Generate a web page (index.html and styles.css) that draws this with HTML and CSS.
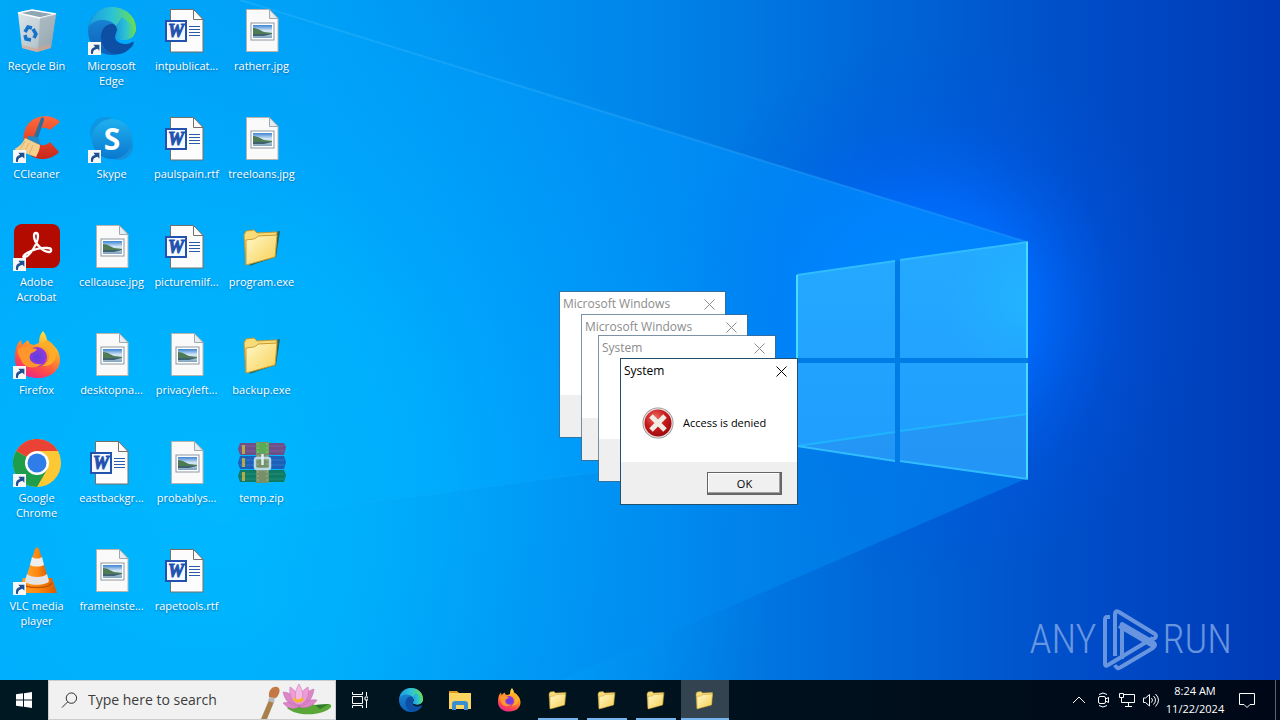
FILE: index.html
```html
<!DOCTYPE html>
<html lang="en">
<head>
<meta charset="utf-8">
<title>Desktop</title>
<link rel="stylesheet" href="styles.css">
</head>
<body>
<svg class="defs" aria-hidden="true">
  <defs>
    <linearGradient id="binG" x1="0" y1="0" x2="1" y2="1"><stop offset="0" stop-color="#dfe7eb"/><stop offset=".6" stop-color="#bccad1"/><stop offset="1" stop-color="#9aa7ae"/></linearGradient>
    <linearGradient id="edgeA" x1="0" y1="0" x2="1" y2="0"><stop offset="0" stop-color="#1b9de0"/><stop offset=".5" stop-color="#2cc3d5"/><stop offset="1" stop-color="#6be04c"/></linearGradient>
    <linearGradient id="edgeB" x1="0" y1="0" x2="0" y2="1"><stop offset="0" stop-color="#1b8fdc"/><stop offset="1" stop-color="#0d5fb8"/></linearGradient>
    <linearGradient id="skyG" x1="0" y1="0" x2="0" y2="1"><stop offset="0" stop-color="#1fb0ee"/><stop offset="1" stop-color="#0a78d0"/></linearGradient>
    <linearGradient id="ccG" x1="0" y1="0" x2="0" y2="1"><stop offset="0" stop-color="#ff6a3c"/><stop offset="1" stop-color="#c8261a"/></linearGradient>
    <linearGradient id="foxG" x1=".8" y1="0" x2=".3" y2="1"><stop offset="0" stop-color="#fff34a"/><stop offset=".4" stop-color="#ff9a26"/><stop offset=".75" stop-color="#ff4a4a"/><stop offset="1" stop-color="#e8258c"/></linearGradient>
    <radialGradient id="foxP"><stop offset="0" stop-color="#5b3fe0"/><stop offset="1" stop-color="#9a38d8"/></radialGradient>
    <linearGradient id="folG" x1="0" y1="0" x2="1" y2="1"><stop offset="0" stop-color="#fff8c8"/><stop offset="1" stop-color="#f8cf52"/></linearGradient>
    <linearGradient id="picG" x1="0" y1="0" x2="0" y2="1"><stop offset="0" stop-color="#3d83d2"/><stop offset=".45" stop-color="#d7eaf7"/><stop offset="1" stop-color="#7fa2bd"/></linearGradient>
    <linearGradient id="coneG" x1="0" y1="0" x2="1" y2="0"><stop offset="0" stop-color="#ffa22a"/><stop offset=".5" stop-color="#ff8a10"/><stop offset="1" stop-color="#d85a00"/></linearGradient>
    <radialGradient id="errG" cx=".4" cy=".3" r=".8"><stop offset="0" stop-color="#ec6a60"/><stop offset=".5" stop-color="#c8181c"/><stop offset="1" stop-color="#8e0808"/></radialGradient>

    <symbol id="shortcut" viewBox="0 0 12 12"><path d="M0 0h12v12H0z" fill="#f7f7f7"/><path d="M3 11c-1-4 1-6 3.500-6.500L5 2.500h5.500v5.500L8.800 6.300C6 7 4.500 8 4.500 11z" fill="#1f4f92"/></symbol>

    <symbol id="bin" viewBox="0 0 48 48">
      <path d="m5 6 14-3 24 4-5 34-14 4-15-4z" fill="url(#binG)"/>
      <path d="m5 6 14-3 24 4-16 4z" fill="#8fa6b2" stroke="#fff" stroke-width="1.300"/>
      <path d="M27 11 43 7l-5 34-13 4z" fill="#8d9ca6" opacity=".5"/>
      <path d="m9 38 13 3 16-4-1 4-13 4-15-4z" fill="#d8a48c" opacity=".6"/>
      <g fill="none" stroke="#1673cc" stroke-width="3.500"><path d="m12 25 3-5 4 1"/><path d="m20 22 3 5-2 4"/><path d="m18 33-5-1-1-4"/></g>
    </symbol>

    <symbol id="edge" viewBox="0 0 48 48">
      <circle cx="24" cy="24" r="24" fill="url(#edgeB)"/>
      <path d="M1 19C4 7 13 0 24 0c14 0 24 10 24 21 0 7-5 12-12 12-5 0-9-2-8-4 2-3 3-6 0-10C23 12 9 10 1 19z" fill="url(#edgeA)"/>
      <path d="M13 30c0-8 5-13 11-13 3 0 5 3 5 7 0 3-4 6 0 10 4 4 11 4 15 1 2-1 2 1 1 3-5 7-12 10-18 9-8-1-14-8-14-17z" fill="#0c4fa4"/>
      <path d="M28 33c4 5 12 5 16 2 3-2 4-1 2 2l3 3V24c-3 6-7 9-13 9-5 0-8-2-8-4 1-2 3-5 2-8-1 3-4 8-2 12z" fill="#00a9fb" class="edge-gap"/>
      <path d="M48 21c0 8-5 12-12 12-5 0-9-2-8-4 2-3 3-6 0-10l6-9z" fill="url(#edgeA)"/>
    </symbol>

    <symbol id="ccleaner" viewBox="0 0 48 48">
      <path d="M47 7C40 0 26-1 17 7S9 32 16 39s22 7 30-2L37 27c-4 4-9 4-12 1s-4-8-1-12 9-4 13-1z" fill="url(#ccG)"/>
      <path d="M28 3c2-1 4 0 3 2l-7 21-4-2z" fill="#2c6f9f"/>
      <path d="m15 21 10 1 3 8-14-4z" fill="#2787c4"/>
      <path d="M12 23 27 30c0 4-2 8-4 12L1 34c5-2 9-6 11-11z" fill="#f4cf8d"/>
      <path d="m12 26-5 9m9-7-5 10m9-8-4 10" stroke="#dcb374" fill="none"/>
    </symbol>

    <symbol id="skype" viewBox="0 0 48 48">
      <circle cx="17" cy="17" r="15" fill="#0f96e2"/><circle cx="31" cy="31" r="14" fill="#1690dc"/>
      <circle cx="24" cy="24" r="20" fill="url(#skyG)"/>
      <text x="24" y="35" text-anchor="middle" class="skype-letter">S</text>
    </symbol>

    <symbol id="acrobat" viewBox="0 0 48 48">
      <rect x="1" y="1" width="46" height="44" rx="8" fill="#b30b00"/>
      <path d="M12 34c5-1 13-14 13-21 0-4-4-4-4 0 0 7 9 16 15 16 3 0 3-4-1-4-7-1-16 2-21 5-5 3-4 5-2 4z" fill="none" stroke="#fff" stroke-width="2.300"/>
    </symbol>

    <symbol id="firefox" viewBox="0 0 48 48">
      <path d="M30 0c3 4 4 7 4 10 8 4 13 10 13 19 0 10-9 18-22 18C10 47 1 38 2 26c0-8 2-14 6-17l1 5 6-5 2 4 4 1 5-2c0-5 1-9 4-12z" fill="url(#foxG)"/>
      <circle cx="24" cy="26" r="10" fill="url(#foxP)"/>
      <path d="M5 18c5-3 9-4 13-1l6 1c-2 4-6 3-7 6-2 6 4 10 12 9-8 6-18 4-21-4-2-5-4-7-3-11z" fill="#ff962b"/>
      <path d="M26 15c5-1 9 2 10 7 1 6-2 11-7 13 10 1 15-6 14-14-1-7-5-10-9-12-3 2-5 3-8 6z" fill="#ffad28"/>
    </symbol>

    <symbol id="chrome" viewBox="0 0 48 48">
      <circle cx="24" cy="24" r="24" fill="#fcc934"/>
      <path d="M24 24 3.200 12A24 24 0 0 1 44.800 12z" fill="#ea4335"/>
      <path d="M3.200 12A24 24 0 0 0 24 48l10.400-18L24 24z" fill="#1e9e4a"/>
      <path d="M24 12h21l2 6H30z" fill="#fcc934"/><path d="M24 12h20.800L40 6 20 5z" fill="#ea4335"/>
      <circle cx="24" cy="24" r="12" fill="#fff"/><circle cx="24" cy="24" r="9.500" fill="#2f7de9"/>
    </symbol>

    <symbol id="vlc" viewBox="0 0 48 48">
      <path d="m10 31-5 15h39l-5-15z" fill="url(#coneG)"/>
      <path d="M22 2c1-2 3-2 4 0l10 32c-2 6-22 6-24 0z" fill="url(#coneG)"/>
      <path d="m19 10-2 8c4 2 10 2 14 0l-2-8c-3 2-7 2-10 0z" fill="#f0eeec"/>
      <path d="m14 27-2 7c2 5 22 5 24 0l-2-7c-4 4-16 4-20 0z" fill="#e6e4e2"/>
      <path d="M9 36c4 6 26 6 30 0" fill="none" stroke="#c85400" stroke-width="1.500"/>
    </symbol>

    <symbol id="word" viewBox="0 0 48 48">
      <path d="M7.500 2.500h23l9.500 10v32.500H7.500z" fill="#fcfcfc" stroke="#74706c"/>
      <path d="M30.500 2.500v10H40z" fill="#fff" stroke="#74706c"/>
      <path d="M26 19.500h11m-11 3h11m-11 3h11m-11 3h11" stroke="#2a5caa"/>
      <rect x="3" y="14" width="20" height="20" fill="#f4f8ff" stroke="#2352ae" stroke-width="2"/>
      <text x="13" y="30" text-anchor="middle" class="word-letter">W</text>
    </symbol>

    <symbol id="image" viewBox="0 0 48 48">
      <path d="M8.500 2.500h23l8.500 9v33H8.500z" fill="#fafafa" stroke="#b9b3ad"/>
      <path d="M31.500 2.500v9H40z" fill="#e4edf2" stroke="#9fa9ae"/>
      <rect x="13" y="16" width="23" height="17" fill="#fff" stroke="#8d97a1"/>
      <path d="M15 18h19v13H15z" fill="url(#picG)"/>
      <path d="M15 21c5 0 8 3 11 4l8 1v1H15z" fill="#4f7a56"/><path d="M15 27h19l-8 2H15z" fill="#3f6070"/>
    </symbol>

    <symbol id="folder" viewBox="0 0 48 48">
      <path d="m11 43 27-9 4-26-4 1z" fill="#274a2e" opacity=".75"/>
      <path d="m6 12 2-4 8-1 3 3 20-1-2 24-29 8z" fill="#f8dc78" stroke="#c39a30"/>
      <path d="M8 17c5-1 9 0 12-4l19-1c-1 9-1 14-2 22L8 42z" fill="url(#folG)" stroke="#c79a2c"/>
    </symbol>

    <symbol id="zip" viewBox="0 0 48 48">
      <path d="M2 4h44l2 4-2 8H2L0 10z" fill="#6e4f88"/><path d="M2 7h44M2 12h44" stroke="#80619a"/>
      <path d="M2 17h44l2 6-2 7H2l-2-6z" fill="#1c60b8"/><path d="M2 21h44M2 26h44" stroke="#2f76cc"/>
      <path d="M2 31h44l2 5-2 7H2l-2-6z" fill="#117a64"/><path d="M2 35h44M2 40h44" stroke="#1d9274"/>
      <path d="M4 6h3v9H4zm0 13h3v9H4zm0 14h3v9H4z" fill="#b7a84e"/>
      <path d="M18 3h13v41H18z" fill="#76906a"/><path d="M18 4h13v10H18z" fill="#5bab58"/><path d="M20 4v40m9-40v40" stroke="#9db783" stroke-dasharray="2 2"/>
      <rect x="17" y="19" width="15" height="11" rx="2" fill="none" stroke="#b9d7e6" stroke-width="2.500"/><path d="M24.500 15v11" stroke="#e1eef4" stroke-width="2.500"/>
    </symbol>

    <symbol id="close" viewBox="0 0 11 11"><path d="m.5.5 10 10m0-10-10 10" fill="none" stroke="currentColor"/></symbol>
  </defs>
</svg>

<div class="screen">
  <svg class="wallpaper" viewBox="0 0 1280 720" preserveAspectRatio="none" aria-hidden="true">
    <defs>
      <linearGradient id="base" x1="0" x2="1" y1="0" y2="0"><stop offset="0" stop-color="#00a8f8"/><stop offset=".25" stop-color="#009ff6"/><stop offset=".5" stop-color="#0086ea"/><stop offset=".7" stop-color="#0064d6"/><stop offset=".85" stop-color="#004cc8"/><stop offset="1" stop-color="#003ab6"/></linearGradient>
      <radialGradient id="leftGlow" gradientUnits="userSpaceOnUse" cx="220" cy="500" r="560"><stop offset="0" stop-color="#00b8ff"/><stop offset=".4" stop-color="#00b4ff" stop-opacity=".8"/><stop offset="1" stop-color="#00a4ff" stop-opacity="0"/></radialGradient>
      <radialGradient id="winGlow" gradientUnits="userSpaceOnUse" cx="930" cy="310" r="270"><stop offset="0" stop-color="#0084ff"/><stop offset=".4" stop-color="#006cff" stop-opacity=".8"/><stop offset=".7" stop-color="#0058ec" stop-opacity=".25"/><stop offset="1" stop-color="#0050e0" stop-opacity="0"/></radialGradient>
      <linearGradient id="beam" gradientUnits="userSpaceOnUse" x1="240" x2="1027" y1="0" y2="0"><stop offset="0" stop-color="#00acff" stop-opacity="0"/><stop offset=".5" stop-color="#0098ff" stop-opacity=".5"/><stop offset="1" stop-color="#0088ff" stop-opacity=".8"/></linearGradient>
      <linearGradient id="ray" gradientUnits="userSpaceOnUse" x1="240" x2="1027" y1="0" y2="0"><stop offset="0" stop-color="#50c4ff" stop-opacity=".25"/><stop offset="1" stop-color="#30a4ff" stop-opacity=".35"/></linearGradient>
      <linearGradient id="low" gradientUnits="userSpaceOnUse" x1="250" x2="1000" y1="0" y2="0"><stop offset="0" stop-color="#0098e8" stop-opacity="0"/><stop offset=".6" stop-color="#0078da" stop-opacity=".3"/><stop offset="1" stop-color="#0068d8" stop-opacity=".6"/></linearGradient>
      <linearGradient id="pane" x1="0" x2="0" y1="0" y2="1"><stop offset="0" stop-color="#24aaff"/><stop offset="1" stop-color="#209cff"/></linearGradient>
      <radialGradient id="paneGlow" gradientUnits="userSpaceOnUse" cx="1027" cy="302" r="80"><stop offset="0" stop-color="#20c0ff" stop-opacity=".5"/><stop offset="1" stop-color="#20c0ff" stop-opacity="0"/></radialGradient>
    </defs>
    <path d="M0 0h1280v720H0z" fill="url(#base)"/>
    <path d="M0 0h1280v720H0z" fill="url(#leftGlow)"/>
    <path d="M0 0h1280v720H0z" fill="url(#winGlow)"/>
    <path d="M240 0 1027 242v236L560 680H0V0z" fill="url(#beam)"/>
    <path d="M160 530 797 446l230 32-467 202H0z" fill="url(#low)"/>
    <path d="M240 0 1027 242" stroke="url(#ray)" stroke-width="2"/>
    <path d="M160 530 797 446" stroke="#20b4ff" stroke-opacity=".12" stroke-width="2"/>
    <path d="M797 275 1028 242v237L797 446z" fill="#007ce6"/>
    <path d="M797 275 895 261v97h-98zM900 260l128-18v116H900zM797 363h98v98l-98-15zM900 363h128v116l-128-18z" fill="url(#pane)"/>
    <path d="m900 260 128-18v116H900z" fill="url(#paneGlow)"/>
    <path d="m797 446 98-14v29zM900 431l128-17v65l-128-18z" fill="#2494f4" fill-opacity=".8"/>
    <path d="m797 446 98-14m5-1 128-17" stroke="#20b4ff" stroke-width="2"/>
    <path d="m797 275 98-14m5-1 128-18M797 446l98 15m5 0 128 18" stroke="#30bcff" fill="none" stroke-width="2"/>
    <path d="M797 275v83m0 5v83M1027 242v116m0 5v115" stroke="#44dcff" stroke-width="2"/>
  </svg>

  <main class="workspace">
    <div class="shortcuts">
      <button class="item"><svg class="glyph"><use href="#bin"/></svg><span>Recycle Bin</span></button>
      <button class="item"><svg class="glyph"><use href="#ccleaner"/><use href="#shortcut" y="35" width="13" height="13"/></svg><span>CCleaner</span></button>
      <button class="item"><svg class="glyph"><use href="#acrobat"/><use href="#shortcut" y="35" width="13" height="13"/></svg><span>Adobe Acrobat</span></button>
      <button class="item"><svg class="glyph"><use href="#firefox"/><use href="#shortcut" y="35" width="13" height="13"/></svg><span>Firefox</span></button>
      <button class="item"><svg class="glyph"><use href="#chrome"/><use href="#shortcut" y="35" width="13" height="13"/></svg><span>Google Chrome</span></button>
      <button class="item"><svg class="glyph"><use href="#vlc"/><use href="#shortcut" y="35" width="13" height="13"/></svg><span>VLC media player</span></button>

      <button class="item"><svg class="glyph"><use href="#edge"/><use href="#shortcut" y="35" width="13" height="13"/></svg><span>Microsoft Edge</span></button>
      <button class="item"><svg class="glyph"><use href="#skype"/><use href="#shortcut" y="35" width="13" height="13"/></svg><span>Skype</span></button>
      <button class="item"><svg class="glyph"><use href="#image"/></svg><span>cellcause.jpg</span></button>
      <button class="item"><svg class="glyph"><use href="#image"/></svg><span>desktopna...</span></button>
      <button class="item"><svg class="glyph"><use href="#word"/></svg><span>eastbackgr...</span></button>
      <button class="item"><svg class="glyph"><use href="#image"/></svg><span>frameinste...</span></button>

      <button class="item"><svg class="glyph"><use href="#word"/></svg><span>intpublicat...</span></button>
      <button class="item"><svg class="glyph"><use href="#word"/></svg><span>paulspain.rtf</span></button>
      <button class="item"><svg class="glyph"><use href="#word"/></svg><span>picturemilf...</span></button>
      <button class="item"><svg class="glyph"><use href="#image"/></svg><span>privacyleft...</span></button>
      <button class="item"><svg class="glyph"><use href="#image"/></svg><span>probablys...</span></button>
      <button class="item"><svg class="glyph"><use href="#word"/></svg><span>rapetools.rtf</span></button>

      <button class="item"><svg class="glyph"><use href="#image"/></svg><span>ratherr.jpg</span></button>
      <button class="item"><svg class="glyph"><use href="#image"/></svg><span>treeloans.jpg</span></button>
      <button class="item"><svg class="glyph"><use href="#folder"/></svg><span>program.exe</span></button>
      <button class="item"><svg class="glyph"><use href="#folder"/></svg><span>backup.exe</span></button>
      <button class="item"><svg class="glyph"><use href="#zip"/></svg><span>temp.zip</span></button>
    </div>

    <section class="window w1"><header class="titlebar"><h2>Microsoft Windows</h2><button class="close" aria-label="Close"><svg><use href="#close"/></svg></button></header><div class="body"></div><footer class="foot"></footer></section>
    <section class="window w2"><header class="titlebar"><h2>Microsoft Windows</h2><button class="close" aria-label="Close"><svg><use href="#close"/></svg></button></header><div class="body"></div><footer class="foot"></footer></section>
    <section class="window w3"><header class="titlebar"><h2>System</h2><button class="close" aria-label="Close"><svg><use href="#close"/></svg></button></header><div class="body"></div><footer class="foot"></footer></section>
    <section class="window w4 active" role="dialog" aria-label="System">
      <header class="titlebar"><h2>System</h2><button class="close" aria-label="Close"><svg><use href="#close"/></svg></button></header>
      <div class="body">
        <svg class="error" viewBox="0 0 32 32" aria-hidden="true"><circle cx="16" cy="16" r="15.500" fill="#8f8f8f"/><circle cx="16" cy="16" r="14.700" fill="#e8dcdc"/><circle cx="16" cy="16" r="13.500" fill="url(#errG)"/><path d="m9 9 14 14m0-14L9 23" stroke="#f0ece4" stroke-width="5"/></svg>
        <p>Access is denied</p>
      </div>
      <footer class="foot"><button class="ok">OK</button></footer>
    </section>

    <div class="watermark">
      <span>ANY</span>
      <svg viewBox="0 0 56 64" aria-hidden="true"><g fill="none" stroke="currentColor" stroke-width="4" stroke-linejoin="round"><path d="M8 9H5q-2 0-2 3v44q0 3 3 1l45-27"/><path d="M13 48V6q0-4 4-2l36 22q2 2 0 4l-2 1"/><path d="m17 18 34 20"/><path d="m13 57q2 5 6 2l32-19q4-3 0-6L20 16v35"/></g></svg>
      <span>RUN</span>
    </div>
  </main>

  <nav class="taskbar">
    <button class="task start" aria-label="Start"><svg viewBox="0 0 16 16"><path d="M0 2.300 7 1.300v6.200H0zM8 1.200 16 0v7.500H8zM0 8.500h7v6.200l-7-1zM8 8.500h8V16l-8-1.200z" fill="#fff"/></svg></button>
    <label class="search">
      <svg class="lens" viewBox="0 0 18 18"><circle cx="11" cy="6.500" r="5.500"/><path d="m7 10.500-6 6"/></svg>
      <input type="text" placeholder="Type here to search" aria-label="Search">
      <svg class="art" viewBox="0 0 76 38" aria-hidden="true">
        <path d="M28 27c6-7 18-8 28-3l14-1c5 1 1 6-6 8-12 4-28 3-36-4z" fill="#5aa637"/><path d="m56 24 14-1-9 5z" fill="#2f7c2c"/>
        <g fill="#dc86c8" stroke="#c068b0" stroke-width=".5"><path d="M24 11c8 0 12 6 16 14-10 0-14-6-16-14zM55 8c-8 2-12 8-15 17 10-1 14-9 15-17zM24 22c6-2 12 0 16 4-7 3-12 1-16-4zM58 19c-7-1-13 1-18 7 8 2 14-1 18-7z"/><path d="M31 6c7 4 9 10 9 19-8-4-10-11-9-19zM49 6c-7 4-10 10-9 19 8-4 11-11 9-19z" fill="#ec9cd6"/><path d="M40 3c5 8 5 14 0 21-5-7-5-13 0-21z" fill="#f4b8e2"/></g>
        <path d="M35 16q4 5 8 0l2 3q-6 5-11 0z" fill="#f6b72c"/>
        <path d="m2 38 8-19 5 2-7 17z" fill="#a8804c"/><path d="m9 20 2-5 5 1-1 6z" fill="#b6b9bb"/><path d="M10 16c-1-6 3-11 8-10 4 1 3 7-1 11z" fill="#c47844"/>
      </svg>
    </label>
    <button class="task" aria-label="Task view"><svg class="view" viewBox="0 0 16 16"><path d="M.5 4.500h10v7H.500zM.5 0v2.500h10V0M.5 16v-2.500h10V16M14.500 0v4m0 4v8M13 5h3v3h-3z"/></svg></button>
    <div class="pinned">
      <button class="task" aria-label="Microsoft Edge"><svg class="app"><use href="#edge"/></svg></button>
      <button class="task" aria-label="File Explorer"><svg class="app" viewBox="0 0 24 24"><path d="M1 3h8l2 2h12v3H1z" fill="#e09a1c"/><path d="M1 5h22v16H1z" fill="#fbd560"/><path d="M4 22v-6q0-3 3-3h10q3 0 3 3v6h-4v-5H8v5z" fill="#3a8fd0"/></svg></button>
      <button class="task" aria-label="Firefox"><svg class="app"><use href="#firefox"/></svg></button>
      <button class="task open" aria-label="Program 1"><svg class="app"><use href="#folder"/></svg></button>
      <button class="task open" aria-label="Program 2"><svg class="app"><use href="#folder"/></svg></button>
      <button class="task open" aria-label="Program 3"><svg class="app"><use href="#folder"/></svg></button>
      <button class="task open current" aria-label="Program 4"><svg class="app"><use href="#folder"/></svg></button>
    </div>
    <div class="tray">
      <button class="tray-item" aria-label="Show hidden icons"><svg viewBox="0 0 16 16"><path d="m2 11 6-6 6 6"/></svg></button>
      <button class="tray-item" aria-label="Meet now"><svg viewBox="0 0 16 16"><rect x="3.500" y="4.500" width="7" height="7" rx="1.500"/><path d="m10.500 7 3-1.500v5l-3-1.500M4 2.500q4-3 8 0m-8 11q4 3 8 0"/></svg></button>
      <button class="tray-item" aria-label="Network"><svg viewBox="0 0 16 16"><path d="M5 2.500h10.500v8H5M9.500 10.500v3.500M6 14.500h7M.5 1.500h4v4h-4zM2.500 5.500v5h3"/></svg></button>
      <button class="tray-item" aria-label="Volume"><svg viewBox="0 0 16 16"><path d="M.5 6v4.500h2l4 3.500V2.500L2.500 6zM8.500 6q2 2 0 4.500M10.500 4q4 4 0 8.500M12.500 2q6 6 0 12.500"/></svg></button>
      <button class="clock"><span>8:24 AM</span><span>11/22/2024</span></button>
      <button class="notes" aria-label="Notifications"><svg viewBox="0 0 16 16"><path d="M.5 1.500h15v11H11l-3 3-3-3H.5z"/></svg></button>
      <button class="peek" aria-label="Show desktop"></button>
    </div>
  </nav>
</div>
</body>
</html>
```
FILE: styles.css
```css
* { box-sizing: border-box; }
body { margin: 0; font-family: "Open Sans", "Noto Sans", sans-serif; font-size: 11px; }
button { margin: 0; padding: 0; border: 0; background: none; font: inherit; color: inherit; }
h2, p { margin: 0; font-weight: 400; }
svg { display: block; }
.defs { position: absolute; width: 0; height: 0; }

.screen { position: relative; display: flex; flex-direction: column; height: 100vh; overflow: hidden; }
.wallpaper { position: absolute; inset: 0; width: 100%; height: 100%; }
.workspace { position: relative; flex: 1; min-height: 0; }

.shortcuts { display: grid; grid-auto-flow: column; grid-template-rows: repeat(6, 108px); grid-auto-columns: 75px; justify-content: start; }
.item { display: flex; flex-direction: column; align-items: center; gap: 3px; padding: 7px 2px 0 0; color: #fff; line-height: 15px; text-align: center; text-shadow: 0 1px 2px rgba(0, 40, 90, 0.5); }
.glyph { width: 48px; height: 48px; }
.skype-letter { font: 700 30px "Open Sans", sans-serif; fill: #fff; text-shadow: none; }
.word-letter { font: italic 700 18px "Liberation Serif", serif; fill: #2352ae; stroke: #2352ae; text-shadow: none; }
.pinned .app { --gap: #00141f; }
.edge-gap { fill: var(--gap, #00a9fb); }

.window { position: absolute; display: flex; flex-direction: column; width: 178px; height: 147px; border: 1px solid rgba(70, 100, 130, 0.7); background: #fff; background-clip: padding-box; color: #8c8c8c; }
.w1 { left: 559px; top: 291px; width: 167px; }
.w2 { left: 581px; top: 314px; width: 167px; }
.w3 { left: 598px; top: 335px; }
.w4 { left: 620px; top: 358px; }
.active { border-color: #23506f; color: #000; }
.titlebar { display: flex; justify-content: space-between; align-items: center; height: 24px; padding: 0 10px 0 3px; }
.titlebar h2 { font-size: 12px; line-height: 16px; }
.close svg { width: 11px; height: 11px; }
.body { display: flex; flex: 1; align-items: center; gap: 9px; padding: 0 21px; }
.error { width: 32px; height: 32px; }
.foot { display: flex; justify-content: flex-end; align-items: center; height: 42px; padding-right: 15px; background: #efefef; }
.ok { width: 75px; height: 23px; border: 1px solid #646464; background: #f0f0f0; box-shadow: inset -1px -1px #696969, inset -2px -2px #a0a0a0, inset 1px 1px #fff; }

.watermark { position: absolute; right: 48px; bottom: 8px; display: flex; align-items: center; gap: 5px; color: #7ba3e4; font: 300 40px/64px "Roboto Condensed", "Liberation Sans Narrow", "Open Sans Condensed", sans-serif; opacity: 0.85; }
.watermark svg { width: 56px; height: 64px; }

.taskbar { position: relative; display: flex; height: 40px; background: linear-gradient(90deg, #001822, #00131e 50%, #000817); color: #fff; }
.task { display: flex; align-items: center; justify-content: center; width: 48px; height: 40px; }
.start svg { width: 16px; height: 16px; }
.search { display: flex; align-items: center; width: 288px; padding-left: 12px; border: 1px solid #c9cdd0; background: #f1f1f1; }
.lens { width: 17px; height: 17px; fill: none; stroke: #222; }
.search input { flex: 1; min-width: 0; margin-left: 10px; padding: 0; border: 0; outline: 0; background: none; font: 14px/20px "Open Sans", sans-serif; color: #333; }
.search input::placeholder { color: #3c3c3c; opacity: 1; }
.art { width: 76px; height: 38px; }
.view { width: 16px; height: 16px; fill: none; stroke: #fff; }
.pinned { display: flex; gap: 1px; margin-left: 3px; }
.app { width: 24px; height: 24px; }
.open { background: linear-gradient(#76b4ee, #76b4ee) bottom / 40px 2px no-repeat; }
.current { background: linear-gradient(#76b4ee, #76b4ee) bottom / 48px 2px no-repeat #334450; }
.tray { display: flex; margin-left: auto; }
.tray-item { display: flex; align-items: center; justify-content: center; width: 24px; }
.tray svg { width: 16px; height: 16px; fill: none; stroke: #fff; }
.clock { display: flex; flex-direction: column; justify-content: center; align-items: center; width: 64px; line-height: 18px; }
.notes { display: flex; align-items: center; justify-content: center; width: 40px; }
.peek { width: 5px; margin-left: 8px; border-left: 1px solid #5b6473; }
```
